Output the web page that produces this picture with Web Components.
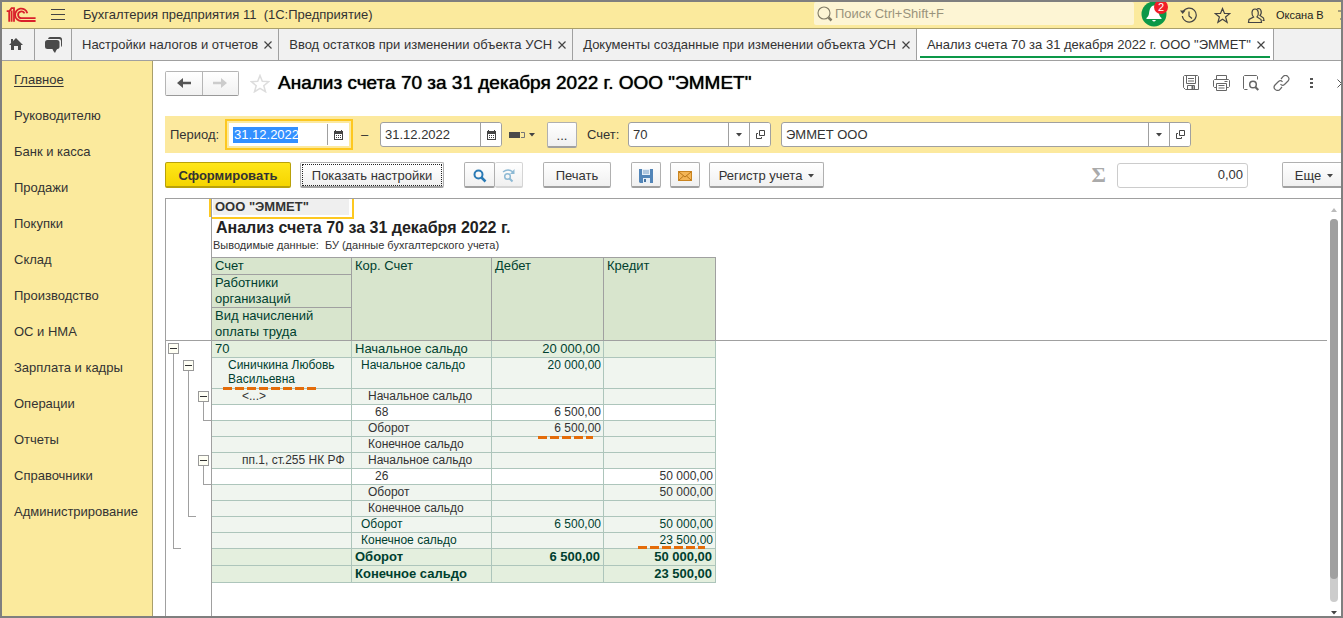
<!DOCTYPE html>
<html lang="ru">
<head>
<meta charset="utf-8">
<title>Анализ счета 70</title>
<style>
  html, body { margin: 0; height: 100%; }
  body { font: 13px/16px "Liberation Sans", Arial, sans-serif; color: #333; background: #fff; }
</style>
</head>
<body>
<app-window></app-window>
<script>
const BASE = `<style>
  *, *::before, *::after { box-sizing: border-box; }
  button, input { font: inherit; color: inherit; margin: 0; }
  button { cursor: pointer; }
  a { color: inherit; text-decoration: none; }
</style>`;

function define(name, render) {
  customElements.define(name, class extends HTMLElement {
    constructor() { super(); this.attachShadow({ mode: 'open' }); }
    connectedCallback() {
      const t = document.createElement('template');
      t.innerHTML = BASE + render(this);
      this.shadowRoot.replaceChildren(t.content.cloneNode(true));
    }
  });
}

const ICONS = {
  logo: [30, 16, '<g fill="none" stroke="#d9202b" stroke-width="1.800"><path d="M.7 4.200h2.500v10.600M3.200 4.200L5.600 1.200H8v13.600M5.600 3.500v11.300"/><path d="M21.300 6.200A6.200 6.200 0 1 0 15.600 14h14M18.600 6.400A3.400 3.400 0 1 0 15.800 11.200h13.800"/></g>'],
  menu: [14, 12, '<path d="M0 .5h14M0 5.500h14M0 10.500h14" stroke="#444" stroke-width="1"/>'],
  home: [14, 13, '<path fill="#4a4a4a" d="M7 0l7 7h-2v5H9V8H5v4H2V7H0zM2 1h2v2L2 5z"/>'],
  chat: [17, 16, '<path fill="#4a4a4a" d="M5 0h9.5A2.5 2.5 0 0 1 17 2.500V8q0 1.500-1 2V4Q16 2 14 2H3Q3.500 0 5 0z"/><rect y="3" width="14.500" height="9" rx="2.500" fill="#4a4a4a"/><path fill="#4a4a4a" d="M7 11h6q-2 2-3 5-2-2-3-5z"/>'],
  x: [8, 8, '<path d="M.5.5l7 7M7.500.5l-7 7" stroke="#444" stroke-width="1.200"/>'],
  find: [16, 16, '<circle cx="7" cy="7" r="6" fill="none" stroke="#827c66" stroke-width="1.100"/><path d="M11.500 11.500l3 3" stroke="#827c66" stroke-width="2.500"/>'],
  bell: [26, 26, '<circle cx="13" cy="13" r="12.500" fill="#0c9848"/><path fill="#fff" d="M13 4.500c4 .5 4.500 5 5 8 .2 2 1 3 2.500 4.500v1h-15v-1C7 15.500 7.800 14.500 8 12.500c.5-3 1-7.500 5-8zM11 19h4q-2 3-4 0z"/>'],
  history: [17, 17, '<g fill="none" stroke="#444"><path d="M2.300 9A7 7 0 1 0 3.200 4.500" stroke-width="1.200"/><path d="M9 4.500v4.500l3 2.500" stroke-width="1.200"/></g><path fill="#444" d="M0 3.500h5.500L2.700 7z"/>'],
  star: [17, 17, '<path fill="none" stroke="#444" stroke-width="1.200" d="M8.500 1.500l2 5h5.300l-4.200 3.500 1.500 5.300-4.600-3-4.600 3L5.400 10 1.200 6.500h5.300z"/>'],
  users: [18, 17, '<g fill="none" stroke="#444" stroke-width="1.200"><path d="M6.500 10C4.500 8 4 2 8 2s4 6 2 8l4 2.500.5 3h-13l.5-3z"/><path d="M10 2c4-2 5.500 4 3 6.500l3.500 2.500.5 2.500h-1.500"/></g>'],
  lines: [8, 12, '<path d="M0 2h8M2 10h6" stroke="#555"/>'],
  left: [14, 10, '<path fill="#555" d="M0 5l6-5v3.800h8v2.400H6V10z"/>'],
  right: [14, 10, '<path fill="#ccc" d="M14 5L8 0v3.800H0v2.400h8V10z"/>'],
  favorite: [20, 19, '<path fill="none" stroke="#ddd" stroke-width="1.500" d="M10 1.500l2.300 5.800 6.500.3-5 4.100 1.700 6-5.500-3.400-5.500 3.400 1.700-6-5-4.100 6.500-.3z"/>'],
  save: [16, 16, '<g fill="none" stroke="#666"><path d="M1.500.5h13l1 1v13h-13l-2-2v-11z"/><path d="M3.500.5v8h9v-8M5 3.500h6M5 6h6M4.500 14.500v-4h7v4"/></g><path fill="#666" d="M8.500 11h2v3h-2z"/>'],
  print: [17, 16, '<g fill="none" stroke="#666"><path d="M3.500 4.500v-4h10v4M3.500 12.500h-2l-1-1v-6l1-1h14l1 1v6l-1 1h-2"/><path d="M3.500 8.500h10v7h-10zM5.500 10.500h6M5.500 13h6M11.500 6.500h3"/></g>'],
  preview: [16, 16, '<g fill="none" stroke="#666"><path d="M4.500 14.500h-3l-1-1V1.500l1-1h12l1 1v3"/><circle cx="10" cy="9.500" r="3.300" stroke-width="1.500"/><path d="M12.300 12l3 3" stroke-width="2"/></g>'],
  link: [17, 16, '<g fill="none" stroke="#666" stroke-width="1.200"><path d="M8 4l2-2.300a3.200 3.200 0 0 1 5 4.300l-3.500 3.500a3 3 0 0 1-4-.3"/><path d="M9 12l-2 2.300a3.200 3.200 0 0 1-5-4.300l3.500-3.500a3 3 0 0 1 4 .3"/></g>'],
  dots: [3, 12, '<path fill="#555" d="M0 1h3v2H0zM0 5h3v2H0zM0 9h3v2H0z"/>'],
  close: [9, 9, '<path d="M.5.5l8 8M8.500.5l-8 8" stroke="#555"/>'],
  calendar: [9, 10, '<path fill="#444" d="M0 1h1V0h1v1h5V0h1v1h1v9H0zM1 4v5h7V4z" fill-rule="evenodd"/><path d="M2 5.500h5M2 7.500h5" stroke="#444" stroke-dasharray="1 1"/>'],
  period: [16, 6, '<path fill="#4a4a4a" d="M0 0h11v6H0z"/><path d="M12 .5h3.500v5H12" fill="none" stroke="#777"/>'],
  down: [6, 4, '<path fill="#444" d="M0 0h6L3 3.500z"/>'],
  open: [9, 9, '<path d="M3.500.5h5v5h-5zM2 3.500H.5v5h5V7" fill="none" stroke="#444"/>'],
  search: [14, 14, '<circle cx="5.500" cy="5.500" r="4" fill="none" stroke="#2a7ab5" stroke-width="2"/><path d="M8.500 8.500l4 4" stroke="#2a7ab5" stroke-width="2.500"/>'],
  again: [14, 14, '<g fill="none" stroke="#8db9d4"><path d="M1 3q5-4 10 0" stroke-width="1.500"/><circle cx="5.500" cy="7.500" r="2.800" stroke-width="1.500"/><path d="M7.500 9.500l3 3" stroke-width="2"/></g><path fill="#8db9d4" d="M12.500 0v5H8z"/>'],
  disk: [14, 14, '<path fill="#5285b8" d="M0 0h14v14H1l-1-1z"/><path fill="#e6eff8" d="M3 0h8v6H3zM4 9h7v5H4z"/><path d="M4 2h6M4 4h6" stroke="#7aa0c6"/><path fill="#46729f" d="M5 10h2v3H5z"/>'],
  mail: [14, 10, '<rect x=".5" y=".5" width="13" height="9" fill="#f4b556" stroke="#c98420"/><path d="M1 1l6 5 6-5M1 9l4.500-4M13 9L8.500 5" fill="none" stroke="#b87518"/>'],
  up: [6, 4, '<path fill="#bbb" d="M0 4h6L3 0z"/>']
};

define('ui-icon', el => {
  const [w, h, body] = ICONS[el.getAttribute('name')];
  return `<style>:host { display: inline-flex; flex: none; } svg { display: block; }</style>
    <svg width="${w}" height="${h}" viewBox="0 0 ${w} ${h}" aria-hidden="true">${body}</svg>`;
});

define('app-window', () => `<style>
    :host { display: grid; grid-template: auto auto 1fr / 151px minmax(0, 1fr); height: 100vh; box-sizing: border-box; border: 2px solid #7f7f7f; overflow: hidden; }
    app-header, tab-strip { grid-column: 1 / -1; }
    .work { display: flex; flex-direction: column; padding-left: 12px; min-height: 0; overflow: hidden; }
  </style>
  <app-header></app-header>
  <tab-strip></tab-strip>
  <section-nav></section-nav>
  <main class="work">
    <form-title></form-title>
    <filter-bar></filter-bar>
    <command-bar></command-bar>
    <report-view></report-view>
  </main>`);

define('app-header', () => `<style>
    :host { display: flex; align-items: center; height: 27px; background: #fbea9d; border-bottom: 1px solid #a99f6b; padding-left: 4px; overflow: hidden; }
    button { display: inline-flex; align-items: center; justify-content: center; flex: none; border: 0; padding: 0; background: none; width: 34px; height: 24px; }
    .menu { width: 14px; margin: 0 18px 0 15px; }
    .name { flex: 1; white-space: pre; }
    .find { display: flex; align-items: center; gap: 2px; width: 320px; height: 23px; align-self: flex-start; background: #fdf5d4; border-radius: 2px; padding-left: 3px; }
    input { flex: 1; min-width: 0; border: 0; padding: 0; background: none; outline: 0; }
    input::placeholder { color: #99937c; opacity: 1; }
    .bell { position: relative; width: 26px; margin: 0 12px 0 7px; }
    .bell ui-icon { margin-top: -2px; }
    .badge { position: absolute; right: -1px; top: -3px; width: 14px; height: 14px; border-radius: 7px; background: #f01e28; color: #fff; font-size: 11px; line-height: 14px; text-align: center; }
    .history { width: 18px; margin-right: 8px; }
    .user { font-size: 11px; color: #222; width: 65px; padding-left: 3px; justify-content: flex-start; white-space: nowrap; }
    .tail { width: 8px; margin-right: -5px; }
  </style>
  <ui-icon name="logo"></ui-icon>
  <button class="menu" aria-label="Меню"><ui-icon name="menu"></ui-icon></button>
  <span class="name">Бухгалтерия предприятия 11  (1С:Предприятие)</span>
  <label class="find"><ui-icon name="find"></ui-icon><input type="search" placeholder="Поиск Ctrl+Shift+F" aria-label="Поиск"></label>
  <button class="bell" aria-label="Уведомления"><ui-icon name="bell"></ui-icon><span class="badge">2</span></button>
  <button class="history" aria-label="История"><ui-icon name="history"></ui-icon></button>
  <button aria-label="Избранное"><ui-icon name="star"></ui-icon></button>
  <button aria-label="Пользователи"><ui-icon name="users"></ui-icon></button>
  <button class="user">Оксана В</button>
  <button class="tail" aria-label="Сервис"><ui-icon name="lines"></ui-icon></button>`);

define('tab-strip', () => `<style>
    :host { display: flex; height: 32px; background: #f1f1f1; border-bottom: 1px solid #a0a0a0; overflow: hidden; }
    .tool { display: flex; align-items: center; justify-content: center; flex: none; width: 33px; padding: 0 5px 0 0; border: 0; border-right: 1px solid #a0a0a0; background: none; }
    .wide { width: 37px; padding: 0; }
  </style>
  <button class="tool" aria-label="Начальная страница"><ui-icon name="home"></ui-icon></button>
  <button class="tool wide" aria-label="Обсуждения"><ui-icon name="chat"></ui-icon></button>
  <page-tab>Настройки налогов и отчетов</page-tab>
  <page-tab>Ввод остатков при изменении объекта УСН</page-tab>
  <page-tab>Документы созданные при изменении объекта УСН</page-tab>
  <page-tab active>Анализ счета 70 за 31 декабря 2022 г. ООО "ЭММЕТ"</page-tab>`);

define('page-tab', () => `<style>
    :host { display: flex; align-items: center; flex: none; gap: 6px; border-right: 1px solid #a0a0a0; padding: 0 6px 0 10px; white-space: nowrap; }
    :host([active]) { background: linear-gradient(#0c9848, #0c9848) 3px 27px / calc(100% - 6px) 2px no-repeat #fff; padding-right: 8px; }
    button { display: flex; border: 0; padding: 0; background: none; }
  </style>
  <a href="#"><slot></slot></a><button aria-label="Закрыть вкладку"><ui-icon name="x"></ui-icon></button>`);

define('section-nav', () => {
  const items = ['Главное', 'Руководителю', 'Банк и касса', 'Продажи', 'Покупки', 'Склад', 'Производство', 'ОС и НМА', 'Зарплата и кадры', 'Операции', 'Отчеты', 'Справочники', 'Администрирование'];
  return `<style>
    :host { display: block; background: #fbea9d; border-right: 1px solid #a99f6b; padding-top: 1px; }
    a { display: block; height: 36px; line-height: 36px; padding-left: 12px; }
    a[aria-current] { text-decoration: underline; text-underline-offset: 2px; }
  </style><nav>${items.map((t, i) => `<a href="#"${i ? '' : ' aria-current="page"'}>${t}</a>`).join('')}</nav>`;
});

define('form-title', () => `<style>
    :host { display: flex; align-items: center; height: 55px; padding-bottom: 11px; overflow: hidden; flex: none; }
    .nav { display: flex; flex: none; width: 74px; height: 25px; border: 1px solid #b5b5b5; border-bottom-color: #999; border-radius: 2px; margin-right: 11px; }
    .nav button { flex: 1; border-right: 1px solid #b5b5b5; background: linear-gradient(#fff, #f1f1f1); }
    .nav button:last-child { border-right: 0; }
    button { display: flex; align-items: center; justify-content: center; flex: none; border: 0; padding: 0; background: none; }
    h1 { font-size: 19px; line-height: 22px; font-weight: 400; text-shadow: 0 0 1px #000; color: #000; margin: 0 auto 0 8px; white-space: nowrap; }
    .tools { display: flex; flex: none; margin-right: -15px; }
    .tools button { width: 30px; height: 24px; }
  </style>
  <div class="nav"><button aria-label="Назад"><ui-icon name="left"></ui-icon></button><button aria-label="Вперед"><ui-icon name="right"></ui-icon></button></div>
  <button aria-label="В избранное"><ui-icon name="favorite"></ui-icon></button>
  <h1>Анализ счета 70 за 31 декабря 2022 г. ООО "ЭММЕТ"</h1>
  <div class="tools">
    <button aria-label="Сохранить"><ui-icon name="save"></ui-icon></button>
    <button aria-label="Печать"><ui-icon name="print"></ui-icon></button>
    <button aria-label="Просмотр"><ui-icon name="preview"></ui-icon></button>
    <button aria-label="Ссылка"><ui-icon name="link"></ui-icon></button>
    <button aria-label="Еще"><ui-icon name="dots"></ui-icon></button>
    <button aria-label="Закрыть"><ui-icon name="close"></ui-icon></button>
  </div>`);

/* Text box with an optional caption and trailing icon buttons */
define('input-field', el => {
  const icons = (el.getAttribute('icons') || '').split(' ').filter(Boolean);
  const label = el.getAttribute('label');
  return `<style>
    :host { display: flex; align-items: center; flex: none; }
    label { flex: none; width: var(--label, auto); }
    .box { display: flex; flex: none; width: var(--box, 122px); height: 25px; border: 1px solid #a0a0a0; border-radius: 3px; background: #fff; overflow: hidden; }
    input { flex: 1; min-width: 0; border: 0; padding: 0 4px; background: none; outline: 0; }
    button { display: flex; align-items: center; justify-content: center; width: 21px; border: 0; border-left: 1px solid #a0a0a0; padding: 0; background: #fff; }
    :host([active]) .box { height: 23px; border-color: #fff; border-radius: 0; outline: 2px solid #fdc820; outline-offset: 2px; }
    :host([active]) input { color: #fff; background: linear-gradient(#3390ff, #3390ff) 3px 3px / 65px 16px no-repeat; }
    :host([quiet]) .box { border-color: #ccc; }
    :host([quiet]) input { text-align: right; }
  </style>
  ${label ? `<label for="f">${label}</label>` : ''}
  <div class="box"><input id="f" type="text" value="${el.getAttribute('value')}"${label ? '' : ` aria-label="${el.getAttribute('hint')}"`}>
  ${icons.map(i => `<button aria-label="${i === 'open' ? 'Открыть' : 'Выбрать'}"><ui-icon name="${i}"></ui-icon></button>`).join('')}</div>`;
});

define('push-button', el => `<style>
    :host { display: block; flex: none; height: 26px; }
    button { display: flex; align-items: center; justify-content: center; gap: 6px; width: 100%; height: 100%; border: 1px solid #b0b0b0; border-bottom: 2px solid #a0a0a0; border-radius: 2px; padding: 3px 4px 0; background: linear-gradient(#fff, #f0f0f0); white-space: nowrap; }
    :host([primary]) button { background: linear-gradient(#ffe61a, #f5d500); border-color: #b9a10a; font-weight: 700; color: #333; }
    :host([focused]) button { outline: 1px dotted #222; outline-offset: -3px; }
    :host([flat]) button { border-color: #d5d5d5; border-left: 0; }
  </style><button${el.hasAttribute('hint') ? ` aria-label="${el.getAttribute('hint')}"` : ''}><slot></slot></button>`);

define('filter-bar', () => `<style>
    :host { display: flex; align-items: center; flex: none; height: 37px; background: #fce99e; padding-left: 5px; }
    .from { --label: 59px; --box: 120px; }
    .dash { width: 31px; text-align: center; }
    .std { display: flex; align-items: center; gap: 4px; border: 0; padding: 0; background: none; margin: 0 12px 0 7px; }
    .dots { width: 30px; margin-right: 10px; }
    .acc { --label: 41px; --box: 143px; margin-right: 10px; }
    .org { --box: 410px; }
  </style>
  <input-field class="from" active label="Период:" value="31.12.2022" icons="calendar"></input-field>
  <span class="dash">–</span>
  <input-field value="31.12.2022" hint="Конец периода" icons="calendar"></input-field>
  <button class="std" aria-label="Стандартный период"><ui-icon name="period"></ui-icon><ui-icon name="down"></ui-icon></button>
  <push-button class="dots">...</push-button>
  <input-field class="acc" label="Счет:" value="70" icons="down open"></input-field>
  <input-field class="org" value="ЭММЕТ ООО" hint="Организация" icons="down open"></input-field>`);

define('command-bar', () => `<style>
    :host { display: flex; align-items: center; flex: none; box-sizing: border-box; height: 45px; padding-bottom: 1px; overflow: hidden; }
    .make { width: 126px; margin-right: 9px; }
    .setup { width: 144px; margin-right: 20px; }
    .find { width: 31px; }
    .next { width: 28px; margin-right: 20px; }
    .print { width: 68px; margin-right: 20px; }
    .icon { width: 30px; margin-right: 9px; }
    .reg { width: 115px; margin-right: auto; }
    .sum { font: 700 22px/24px "Liberation Serif", serif; color: #aaa; margin-right: 11px; }
    .total { --box: 131px; margin-right: 34px; }
    .more { width: 64px; margin-right: -5px; }
  </style>
  <push-button class="make" primary>Сформировать</push-button>
  <push-button class="setup" focused>Показать настройки</push-button>
  <push-button class="find" hint="Найти"><ui-icon name="search"></ui-icon></push-button>
  <push-button class="next" flat hint="Найти далее"><ui-icon name="again"></ui-icon></push-button>
  <push-button class="print">Печать</push-button>
  <push-button class="icon" hint="Сохранить"><ui-icon name="disk"></ui-icon></push-button>
  <push-button class="icon" hint="Отправить"><ui-icon name="mail"></ui-icon></push-button>
  <push-button class="reg">Регистр учета <ui-icon name="down"></ui-icon></push-button>
  <span class="sum">Σ</span>
  <input-field class="total" quiet value="0,00" hint="Сумма"></input-field>
  <push-button class="more">Еще <ui-icon name="down"></ui-icon></push-button>`);

define('tree-node', () => `<style>
    :host { display: flex; flex-direction: column; align-items: flex-start; padding: 2px 0 0 2px; }
    button { display: flex; align-items: center; justify-content: center; flex: none; width: 11px; height: 11px; border: 1px solid #999; padding: 0; background: #fffff4; }
    button::before { content: ""; width: 7px; height: 1px; background: #333; }
    .stem { flex: 1; width: 8px; margin-left: 5px; border: solid #a0a0a0; border-width: 0 0 1px 1px; }
  </style><button aria-label="Свернуть группу"></button><div class="stem"></div>`);

define('report-view', () => `<style>
    :host { display: grid; grid-template-columns: 46px minmax(0, 1fr) 14px; flex: 1; min-height: 0; overflow: hidden; border: solid #a0a0a0; border-width: 1px 0 0 1px; }
    .gutter { display: grid; grid-template: 142px 17px 31px repeat(10, 16px) / repeat(3, 15px); align-content: start; border-right: 1px solid #a0a0a0; }
    .top { grid-column: 1 / -1; border-bottom: 1px solid #a0a0a0; background: linear-gradient(#fdc820, #fdc820) right top / 2px 18px no-repeat; }
    .a { grid-area: 2 / 1 / span 12; }
    .b { grid-area: 3 / 2 / span 9; }
    .c { grid-area: 4 / 3 / span 2; }
    .d { grid-area: 8 / 3 / span 2; }
  </style>
  <div class="gutter"><div class="top"></div>
    <tree-node class="a"></tree-node><tree-node class="b"></tree-node>
    <tree-node class="c"></tree-node><tree-node class="d"></tree-node></div>
  <account-sheet></account-sheet>
  <scroll-rail></scroll-rail>`);

define('scroll-rail', () => `<style>
    :host { display: flex; flex-direction: column; align-items: center; gap: 7px; padding: 9px 1px 1px 0; }
    .rail { flex: 1; width: 8px; border-radius: 4px; background: #ccc; margin-bottom: 2px; }
    .thumb { height: 94%; border-radius: 4px; background: #a0a0a0; }
  </style><ui-icon name="up"></ui-icon><div class="rail"><div class="thumb"></div></div><ui-icon name="down"></ui-icon>`);

define('account-sheet', () => {
  const S = 'Начальное сальдо', O = 'Оборот', K = 'Конечное сальдо';
  const rows = [
    ['g0', '70', S, '20 000,00', ''],
    ['g1 person', '<span class="mark name">Синичкина Любовь Васильевна</span>', S, '20 000,00', ''],
    ['g2', '&lt;...&gt;', S, '', ''],
    ['g3', '', '68', '6 500,00', ''],
    ['g2', '', O, '<span class="mark turn">6 500,00</span>', ''],
    ['g2', '', K, '', ''],
    ['g2', 'пп.1, ст.255 НК РФ', S, '', ''],
    ['g3', '', '26', '', '50 000,00'],
    ['g2', '', O, '', '50 000,00'],
    ['g2', '', K, '', ''],
    ['g1', '', O, '6 500,00', '50 000,00'],
    ['g1', '', K, '', '<span class="mark rest">23 500,00</span>'],
    ['g0 total', '', O, '6 500,00', '50 000,00'],
    ['g0 total', '', K, '', '23 500,00']
  ];
  return `<style>
    :host { display: block; overflow: hidden; }
    .head { height: 58px; white-space: nowrap; }
    .head p, .head h2 { margin: 0; }
    .cell { width: 142px; height: 20px; padding-left: 3px; font-weight: 700; border: solid #fdc820; border-width: 0 2px 2px 0; background: linear-gradient(#efefef, #efefef) 1px 0 / 136px 16px no-repeat; line-height: 16px; }
    h2 { font-size: 16px; line-height: 18px; padding-left: 4px; color: #222; }
    .note { font-size: 11px; line-height: 16px; padding-left: 1px; }
    table { width: 100%; table-layout: fixed; border-collapse: separate; border-spacing: 0; }
    .wide { width: 140px; } .slim { width: 112px; }
    th, td { padding: 0 3px; text-align: left; vertical-align: top; font-weight: 400; white-space: nowrap; }
    th { background: #d8e5cd; color: #003f2f; border: solid #a0a0a0; border-width: 0 1px 1px 0; line-height: 16px; white-space: normal; }
    thead tr:first-child th { border-top: 1px solid #a0a0a0; }
    thead td { border-bottom: 1px solid #a0a0a0; }
    .h17 { height: 18px; } .h33 { height: 33px; }
    tbody tr { height: 16px; }
    tbody td { border: solid #adc5bb; border-width: 0 1px 1px 0; }
    .g0 { height: 17px; color: #003f2f; } .g0 td { background: #e4efde; line-height: 16px; }
    .g1 { color: #003f2f; } .g1 td, .g2 td { background: #f0f5ef; }
    tbody td:last-child { border: 0; background: none; }
    .g1 td, .g2 td, .g3 td { font-size: 12px; line-height: 14px; padding-right: 2px; }
    .g1 td:nth-child(2) { padding-left: 9px; } .g2 td:nth-child(2) { padding-left: 16px; } .g3 td:nth-child(2) { padding-left: 23px; }
    .g1 td:nth-child(1) { padding-left: 16px; } .g2 td:nth-child(1) { padding-left: 30px; }
    td:nth-child(3), td:nth-child(4) { text-align: right; }
    .person { height: 31px; } .person td:first-child { white-space: normal; }
    .total td { font-weight: 700; }
    .mark { position: relative; display: inline-block; }
    .mark::after { content: ""; position: absolute; height: 3px; left: var(--x); top: var(--y); width: var(--w); background: repeating-linear-gradient(90deg, #e46c0a 0 9px, transparent 9px 12px); }
    .name { --w: 94px; --x: -5px; --y: 29px; }
    .turn { --w: 55px; --x: -16px; --y: 15px; }
    .rest { --w: 67px; --x: -22px; --y: 13px; }
  </style>
  <div class="head">
    <p class="cell">ООО "ЭММЕТ"</p>
    <h2>Анализ счета 70 за 31 декабря 2022 г.</h2>
    <p class="note">Выводимые данные:&nbsp; БУ (данные бухгалтерского учета)</p>
  </div>
  <table>
    <colgroup><col class="wide"><col class="wide"><col class="slim"><col class="slim"><col></colgroup>
    <thead>
      <tr class="h17"><th>Счет</th><th rowspan="3">Кор. Счет</th><th rowspan="3">Дебет</th><th rowspan="3">Кредит</th><td rowspan="3"></td></tr>
      <tr class="h33"><th>Работники организаций</th></tr>
      <tr class="h33"><th>Вид начислений оплаты труда</th></tr>
    </thead>
    <tbody>${rows.map(([c, ...v]) => `<tr class="${c}">${v.map(x => `<td>${x}</td>`).join('')}<td></td></tr>`).join('')}</tbody>
  </table>`;
});
</script>
</body>
</html>
